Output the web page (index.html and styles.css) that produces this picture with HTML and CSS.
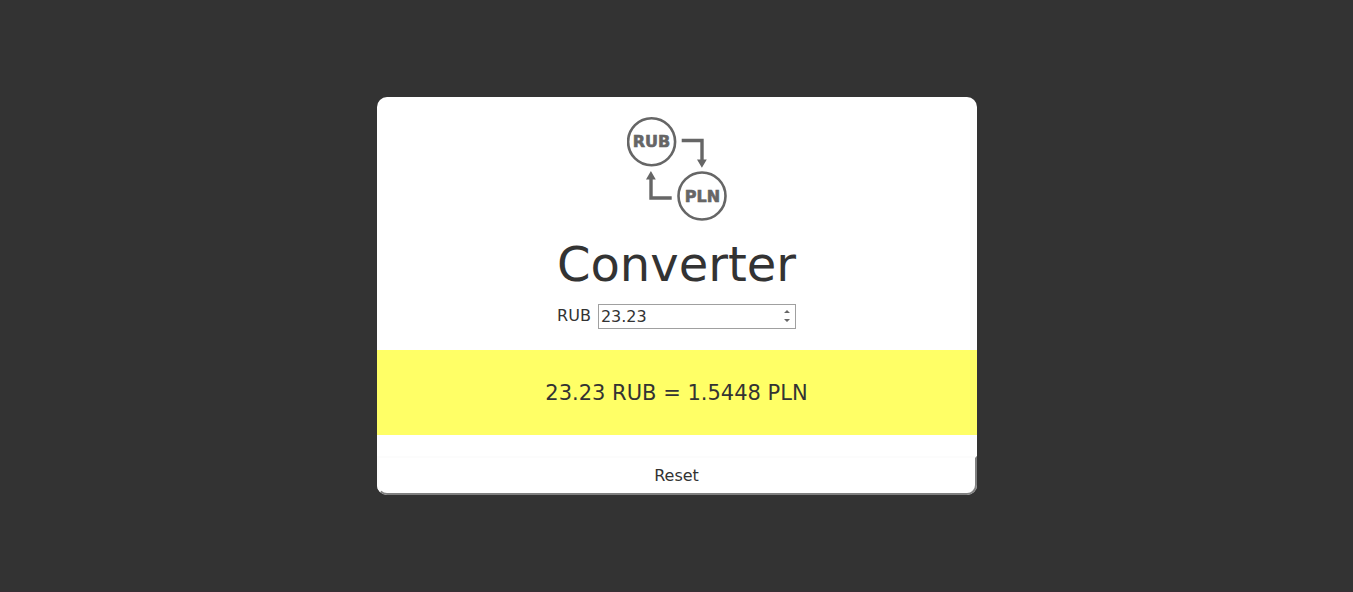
FILE: index.html
```
<!DOCTYPE html>
<html lang="en">
<head>
<meta charset="utf-8">
<title>Converter</title>
<link rel="stylesheet" href="styles.css">
</head>
<body class="page">
<form class="converter">
  <svg class="logo" viewBox="0 0 100 104" role="img" aria-label="RUB to PLN">
    <g class="logo-lines">
      <circle cx="24.6" cy="24.8" r="23.5"/>
      <circle cx="75" cy="79" r="23.5"/>
      <path d="M54.7 23.5H75V43M44.7 81H24V61" stroke-width="3.4"/>
    </g>
    <path class="logo-fill" d="M70 42.5h9.8l-4.9 8.3zM19 62.5h9.8L23.9 54z"/>
    <text class="logo-text" x="24.5" y="30">RUB</text>
    <text class="logo-text" x="75.5" y="85">PLN</text>
  </svg>
  <h1 class="title">Converter</h1>
  <div class="field">
    <label class="label" for="amount">RUB</label>
    <span class="number">
      <input class="amount" id="amount" type="number" step="0.01" value="23.23">
      <svg class="spinner" viewBox="0 0 6 12" aria-hidden="true"><path d="M0 3L3 0L6 3zM0 9H6L3 12z"/></svg>
    </span>
  </div>
  <output class="result" for="amount">23.23 RUB = 1.5448 PLN</output>
  <button class="reset" type="reset">Reset</button>
</form>
</body>
</html>
```
FILE: styles.css
```
* {
  box-sizing: border-box;
}

.page {
  display: flex;
  align-items: center;
  justify-content: center;
  min-height: 100vh;
  margin: 0;
  background: #333;
  border-bottom: 1px solid #382f35;
  color: #333;
  font: 16px/19px "DejaVu Sans", sans-serif;
}

.converter {
  display: flex;
  flex-direction: column;
  align-items: center;
  width: 100%;
  max-width: 600px;
  padding-top: 20px;
  background: #fff;
  border-radius: 10px;
}

.logo {
  width: 100px;
  height: 104px;
}

.logo-lines {
  fill: none;
  stroke: #666;
  stroke-width: 2.6;
}

.logo-fill {
  fill: #666;
}

.logo-text {
  fill: #666;
  stroke: #666;
  stroke-width: 0.6;
  font-size: 16px;
  font-weight: bold;
  text-anchor: middle;
}

.title {
  margin: 15px 0 12px;
  font-size: 48px;
  font-weight: normal;
  line-height: 56px;
}

.field {
  display: flex;
  align-items: center;
  gap: 7px;
}

.label {
  padding-bottom: 2px;
}

.number {
  display: flex;
  align-items: center;
  position: relative;
}

.amount {
  width: 198px;
  height: 25px;
  padding: 1px 2px;
  border: 1px solid #a0a0a0;
  border-radius: 0;
  background: #fff;
  color: inherit;
  font: inherit;
  appearance: textfield;
}

.amount::-webkit-inner-spin-button {
  appearance: none;
}

.spinner {
  position: absolute;
  right: 6px;
  width: 6px;
  height: 12px;
  fill: #666;
}

.result {
  width: 100%;
  margin: 21px 0;
  padding: 31px 20px 29px;
  background: #ff6;
  font-size: 21px;
  line-height: 25px;
  text-align: center;
}

.reset {
  width: 100%;
  height: 39px;
  padding: 0;
  border: 2px solid;
  border-color: #fcfcfc #808080 #808080 #fcfcfc;
  border-radius: 0 0 10px 10px;
  background: #fff;
  color: inherit;
  font: inherit;
}
```
